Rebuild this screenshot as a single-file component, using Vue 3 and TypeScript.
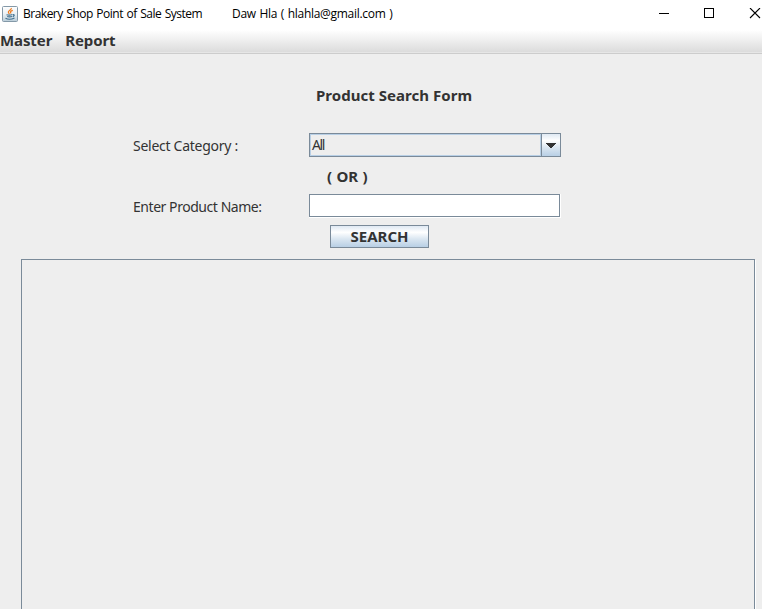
<script setup lang="ts">
import { ref } from 'vue'

const menus: string[] = ['Master', 'Report']
const categories: string[] = ['All']
const category = ref<string>(categories[0])
const productName = ref<string>('')
</script>

<template>
  <div class="window">
    <header class="titlebar">
      <svg class="app-icon" width="16" height="16" viewBox="0 0 16 16">
        <defs>
          <linearGradient id="tile" x1="0" y1="0" x2="0" y2="1">
            <stop offset="0" stop-color="#ffffff" />
            <stop offset="0.5" stop-color="#eaf0f4" />
            <stop offset="1" stop-color="#b9ccd8" />
          </linearGradient>
        </defs>
        <rect x="0.5" y="0.5" width="15" height="15" rx="1" fill="url(#tile)" stroke="#8499a8" />
        <path d="M9.300 2C9.800 4 5.700 4.500 6.400 6.400Q6.700 7.300 7.500 8M10.800 4.300C7.800 5.300 8.300 6.200 9 7.500" fill="none" stroke="#ed7d22" stroke-width="1.300" />
        <path d="M4.500 8.700Q7.500 9.700 10.500 8.500M11 8.500Q13.500 8.600 10.800 10.700M5.200 10.500Q7.500 11.400 10 10.500M3.500 12.300Q7.500 14.300 12.500 12" fill="none" stroke="#41708f" stroke-width="1.200" />
      </svg>
      <span class="title">Brakery Shop Point of Sale System</span>
      <span class="user">Daw Hla ( hlahla@gmail.com )</span>
      <div class="controls">
        <svg width="104" height="12" viewBox="0 0 104 12" fill="none" stroke="#000" shape-rendering="crispEdges">
          <path d="M0 5.500H10M45.500 0.500H54.500V9.500H45.500Z" />
          <path d="M91 0L101 10M101 0L91 10" shape-rendering="auto" stroke-width="1.100" />
        </svg>
      </div>
    </header>
    <nav class="menubar">
      <span v-for="menu in menus" :key="menu" class="menu">{{ menu }}</span>
    </nav>
    <main class="content">
      <h1 class="heading">Product Search Form</h1>
      <div class="row category-row">
        <span class="label category-label">Select Category :</span>
        <div class="combo">
          <span class="combo-value">{{ category }}</span>
          <span class="combo-button">
            <svg width="10" height="5" viewBox="0 0 10 5" shape-rendering="crispEdges">
              <path d="M0 0H10V1H9V2H8V3H7V4H6V5H4V4H3V3H2V2H1V1H0Z" fill="#333" />
            </svg>
          </span>
        </div>
      </div>
      <div class="or">( OR )</div>
      <div class="row name-row">
        <span class="label name-label">Enter Product Name:</span>
        <div class="field"><input v-model="productName" type="text" /></div>
      </div>
      <button class="search" type="button"><span>SEARCH</span></button>
      <section class="results"></section>
    </main>
  </div>
</template>

<style>
body {
  background: #eee;
  overflow: hidden;
}
</style>

<style scoped>
.window {
  display: flex;
  flex-direction: column;
  width: 762px;
  height: 609px;
  overflow: hidden;
  box-sizing: border-box;
  background: #eee;
  color: #333;
  font-family: "Noto Sans", sans-serif;
  white-space: nowrap;
}
.titlebar {
  display: flex;
  align-items: center;
  flex: none;
  height: 30px;
  padding: 0 0 3px 2px;
  box-sizing: border-box;
  background: #fff;
  color: #000;
  font-family: "Open Sans", sans-serif;
  font-size: 12px;
}
.app-icon {
  flex: none;
  margin-right: 5px;
}
.title {
  width: 209px;
  letter-spacing: -0.5px;
  word-spacing: 0.9px;
}
.user {
  letter-spacing: -0.3px;
  word-spacing: 0.9px;
}
.controls {
  margin-left: auto;
  width: 103px;
  height: 12px;
  overflow: hidden;
}
.controls svg {
  display: block;
}
.menubar {
  display: flex;
  flex: none;
  gap: 13px;
  height: 24px;
  box-sizing: border-box;
  border-bottom: 1px solid #ccc;
  background: linear-gradient(#fff, #dadada);
  box-shadow: inset 0 -1px #e6e6e6;
}
.menu,
.heading,
.or,
.search {
  font-family: "Noto Sans", sans-serif;
  font-size: 15px;
  font-weight: 700;
  line-height: 18px;
}
.menu {
  line-height: 20px;
  letter-spacing: -0.1px;
}
.content {
  display: flex;
  flex-direction: column;
  flex: 1;
  min-height: 0;
  padding-top: 32px;
}
.heading {
  margin: 0 0 0 316px;
  height: 20px;
  letter-spacing: 0.04px;
}
.row {
  display: flex;
  align-items: center;
  padding-left: 133px;
}
.label {
  width: 176px;
  padding-top: 2px;
  font-size: 14px;
  line-height: 20px;
}
.category-label {
  letter-spacing: -0.27px;
}
.name-label {
  letter-spacing: -0.45px;
}
.category-row {
  margin-top: 27px;
  height: 24px;
}
.combo {
  display: flex;
  width: 252px;
  height: 24px;
  box-sizing: border-box;
  border: 1px solid #7a8a99;
}
.combo-value {
  flex: 1;
  border: 1px solid #b8cfe5;
  padding-left: 1px;
  font-size: 14px;
  line-height: 20px;
  letter-spacing: -1.4px;
}
.combo-button {
  display: flex;
  align-items: center;
  justify-content: center;
  width: 18px;
  border-left: 1px solid #7a8a99;
  background: linear-gradient(#dfe9f3, #fff 30%, #dae6f1 62%, #b8cfe5);
}
.or {
  margin: 10px 0 0 327px;
  height: 20px;
  word-spacing: 0.5px;
}
.name-row {
  margin-top: 7px;
  height: 24px;
}
.field {
  width: 252px;
  height: 24px;
  box-sizing: border-box;
  padding: 0 1px 1px 0;
  background: #fff;
}
.field input {
  display: block;
  width: 100%;
  height: 100%;
  box-sizing: border-box;
  border: 1px solid #7a8a99;
  border-radius: 0;
  outline: 0;
  background: #fff;
}
.search {
  align-self: flex-start;
  width: 99px;
  height: 23px;
  margin: 7px 0 0 330px;
  padding: 0 0 2px;
  border: 1px solid #7a8a99;
  border-radius: 0;
  background: linear-gradient(#dfe9f3, #fff 30%, #dae6f1 62%, #b8cfe5);
  color: #333;
}
.results {
  flex: 1;
  width: 734px;
  box-sizing: border-box;
  margin: 11px 0 0 21px;
  border: 1px solid #7a8a99;
  border-bottom: 0;
  box-shadow: 1px 1px #fff;
}
</style>
